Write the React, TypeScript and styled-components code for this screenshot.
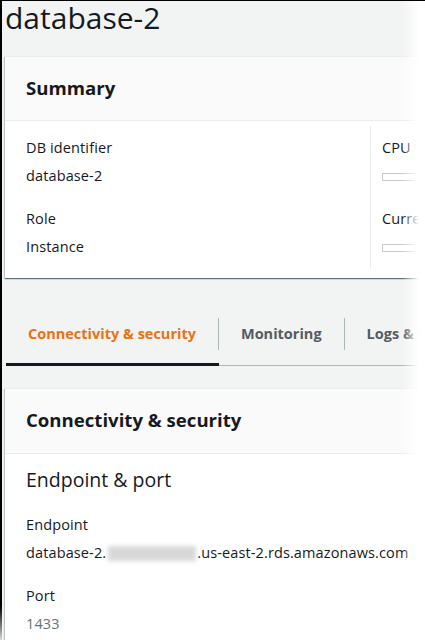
import React from "react";
import styled, { createGlobalStyle } from "styled-components";

const GlobalStyle = createGlobalStyle`
  html, body { margin: 0; padding: 0; background: #fff; }
  body {
    font-family: "Open Sans", "Noto Sans", Arial, sans-serif;
    color: #16191f;
  }
`;

const Frame = styled.div`
  position: relative;
  width: 425px;
  height: 640px;
  box-sizing: border-box;
  overflow: hidden;
  background: #f2f3f3;
  border-style: solid;
  border-width: 1px 0 0 2px;
  border-image: linear-gradient(to bottom, #000 0, #000 605px, #9a9a9a 630px, #e0e0e0 640px) 1;
  padding-left: 3px;
`;

const EdgeFade = styled.div`
  position: absolute;
  top: -1px;
  right: 0;
  bottom: 0;
  width: 23px;
  background: linear-gradient(to right, rgba(255, 255, 255, 0), #fff 17px);
  pointer-events: none;
`;

const Title = styled.h1`
  margin: 0;
  font-size: 30px;
  font-weight: 400;
  line-height: 34px;
  color: #16191f;
  white-space: nowrap;
`;

const Card = styled.section<{ $gap: number }>`
  margin-top: ${(p) => p.$gap}px;
  width: 580px;
  background: #fff;
  border-top: 1px solid #eaeded;
  box-shadow: 0 1px 1px 0 rgba(0, 28, 36, 0.45), 1px 1px 1px 0 rgba(0, 28, 36, 0.15),
    -1px 1px 1px 0 rgba(0, 28, 36, 0.15);
`;

const CardHeader = styled.header<{ $tall?: boolean }>`
  background: #fafafa;
  border-bottom: 1px solid #eaeded;
  padding: ${(p) => (p.$tall ? "19px 22px 21px 21px" : "20px 22px 21px 21px")};
  h2 {
    margin: 0;
    font-size: 18.6px;
    line-height: ${(p) => (p.$tall ? 24 : 22)}px;
    font-weight: 700;
    color: #16191f;
    white-space: nowrap;
  }
`;

const SummaryGrid = styled.div`
  display: grid;
  grid-template-columns: 365px 1fr;
  padding: 5px 0 10px;
`;

const Column = styled.div<{ $divider?: boolean }>`
  display: flex;
  flex-direction: column;
  gap: 21px;
  padding: ${(p) => (p.$divider ? "11px 22px 10px 11px" : "11px 22px 10px 21px")};
  border-left: ${(p) => (p.$divider ? "1px solid #eaeded" : "none")};
`;

const Field = styled.div`
  display: flex;
  flex-direction: column;
  gap: 6px;
`;

const Label = styled.div`
  font-size: 14.5px;
  letter-spacing: 0.12px;
  line-height: 22px;
  color: #16191f;
  white-space: nowrap;
`;

const Value = styled.div<{ $muted?: boolean }>`
  font-size: 14.5px;
  letter-spacing: 0.12px;
  line-height: 22px;
  height: 22px;
  color: ${(p) => (p.$muted ? "#687078" : "#16191f")};
  white-space: nowrap;
`;

const Bar = styled.div`
  margin-top: 8px;
  width: 140px;
  height: 8px;
  box-sizing: border-box;
  border: 1px solid #c6cccc;
  background: #fff;
`;

const TabList = styled.div`
  display: flex;
  margin-top: 40px;
  margin-left: 1px;
  width: 580px;
  border-bottom: 1px solid #aab7b8;
`;

const Tab = styled.button<{ $active?: boolean }>`
  appearance: none;
  background: none;
  border: none;
  margin: 0 0 -1px;
  padding: 0 0 13px;
  border-bottom: 3px solid ${(p) => (p.$active ? "#16191f" : "transparent")};
  font-family: inherit;
  font-size: 14.5px;
  font-weight: 700;
  color: ${(p) => (p.$active ? "#ec7211" : "#545b64")};
  cursor: pointer;
`;

const TabLabel = styled.span<{ $sep?: boolean }>`
  display: block;
  padding: 0 22px;
  line-height: 32px;
  white-space: nowrap;
  border-right: ${(p) => (p.$sep ? "1px solid #aab7b8" : "none")};
`;

const DetailBody = styled.div`
  padding: 14px 21px 40px;
  display: flex;
  flex-direction: column;
  gap: 21px;
`;

const SubHeading = styled.h3`
  margin: 0 0 1px;
  font-size: 19.5px;
  line-height: 24px;
  font-weight: 400;
  color: #16191f;
`;

const Redacted = styled.span`
  display: inline-block;
  width: 88px;
  height: 15px;
  margin: 0 1px 0 2px;
  vertical-align: -3px;
  background: #d8d8d8;
  filter: blur(2px);
`;

export default function App() {
  return (
    <>
      <GlobalStyle />
      <Frame>
        <Title>database-2</Title>
        <Card $gap={21}>
          <CardHeader>
            <h2>Summary</h2>
          </CardHeader>
          <SummaryGrid>
            <Column>
              <Field>
                <Label>DB identifier</Label>
                <Value>database-2</Value>
              </Field>
              <Field>
                <Label>Role</Label>
                <Value>Instance</Value>
              </Field>
            </Column>
            <Column $divider>
              <Field>
                <Label>CPU</Label>
                <Value>
                  <Bar />
                </Value>
              </Field>
              <Field>
                <Label>Current activity</Label>
                <Value>
                  <Bar />
                </Value>
              </Field>
            </Column>
          </SummaryGrid>
        </Card>

        <TabList>
          <Tab $active>
            <TabLabel $sep>Connectivity &amp; security</TabLabel>
          </Tab>
          <Tab>
            <TabLabel $sep>Monitoring</TabLabel>
          </Tab>
          <Tab>
            <TabLabel>Logs &amp; events</TabLabel>
          </Tab>
        </TabList>

        <Card $gap={22}>
          <CardHeader $tall>
            <h2>Connectivity &amp; security</h2>
          </CardHeader>
          <DetailBody>
            <SubHeading>Endpoint &amp; port</SubHeading>
            <Field>
              <Label>Endpoint</Label>
              <Value>
                database-2.<Redacted />.us-east-2.rds.amazonaws.com
              </Value>
            </Field>
            <Field>
              <Label>Port</Label>
              <Value $muted>1433</Value>
            </Field>
          </DetailBody>
        </Card>
        <EdgeFade />
      </Frame>
    </>
  );
}
